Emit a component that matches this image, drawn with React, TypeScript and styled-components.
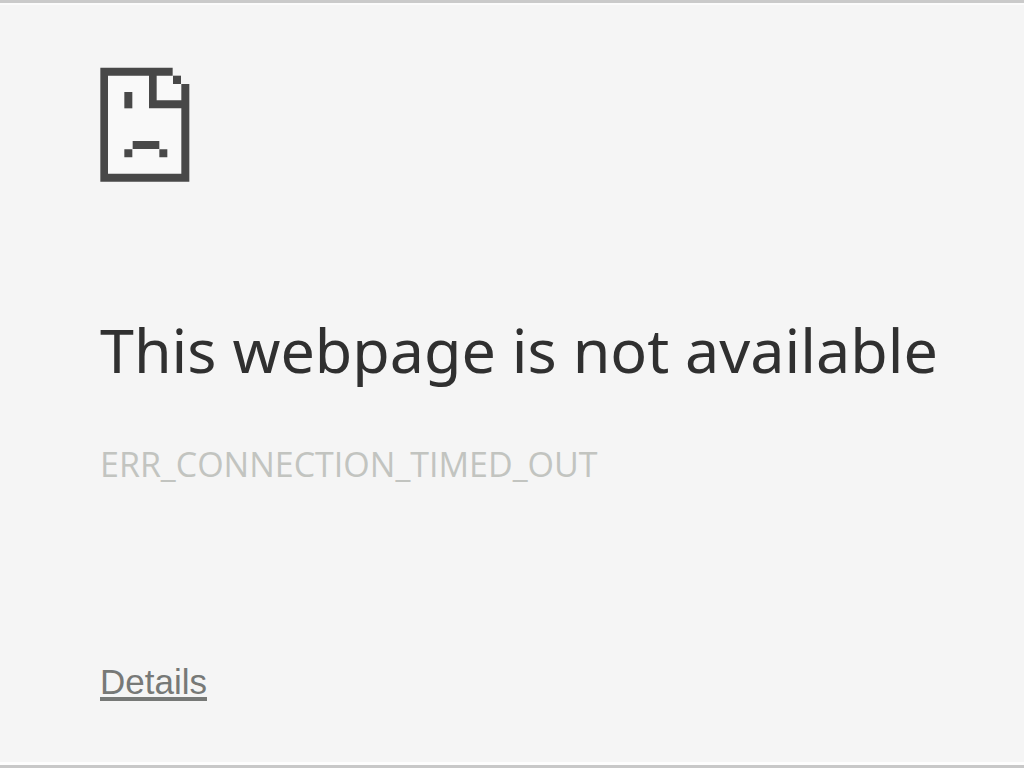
import React, { useState } from "react";
import styled, { createGlobalStyle } from "styled-components";

const GlobalStyle = createGlobalStyle`
  * { box-sizing: border-box; }
  body { margin: 0; background: #f5f5f5; }
`;

const Page = styled.main`
  display: flex;
  flex-direction: column;
  align-items: flex-start;
  min-height: 100vh;
  padding: 64px 24px 56px 100px;
  background: #f5f5f5;
  border-top: 3px solid #cacaca;
  border-bottom: 3px solid #c8c8c8;
  box-shadow: inset 0 2px 0 #fbfbfb, inset 0 -3px 0 #fdfdfd;
  font-family: "Noto Sans", "Open Sans", sans-serif;
`;

const SadPage = styled.svg`
  display: block;
  width: 90px;
  height: 115px;
  fill: #484848;
`;

const Title = styled.h1`
  margin: 126px 0 0;
  font-size: 61px;
  line-height: 84px;
  font-weight: 400;
  color: #303030;
`;

const ErrorCode = styled.p`
  margin: 48px 0 0;
  font-family: "Open Sans", "Noto Sans", sans-serif;
  font-size: 34px;
  line-height: 48px;
  color: #c2c4c0;
`;

const DetailsButton = styled.button`
  margin: 174px 0 0;
  padding: 0;
  border: 0;
  background: none;
  font-family: "Liberation Sans", Arial, sans-serif;
  font-size: 35px;
  line-height: 40px;
  color: #777977;
  text-decoration: underline;
  text-decoration-thickness: 4px;
  text-underline-offset: 3px;
  text-decoration-skip-ink: none;
  cursor: pointer;
`;

export default function App() {
  const [open, setOpen] = useState(false);
  return (
    <>
      <GlobalStyle />
      <Page>
        <SadPage viewBox="30 36 270 345" aria-hidden="true">
          <path fill="#f9f9f9" d="M54 62H248V87H274V356H54Z" />
          <path d="M31 38H248V62H200V136H274V87H298V380H31ZM54 62V356H274V160H177V62Z" fillRule="evenodd" />
          <path d="M249 62H273V87H249Z" />
          <path d="M103 111H127V160H103Z" />
          <path d="M128 258H208V282H128ZM103 283H127V307H103ZM208 283H232V307H208Z" />
        </SadPage>
        <Title>This webpage is not available</Title>
        <ErrorCode>ERR_CONNECTION_TIMED_OUT</ErrorCode>
        <DetailsButton type="button" aria-expanded={open} onClick={() => setOpen(!open)}>
          Details
        </DetailsButton>
      </Page>
    </>
  );
}
